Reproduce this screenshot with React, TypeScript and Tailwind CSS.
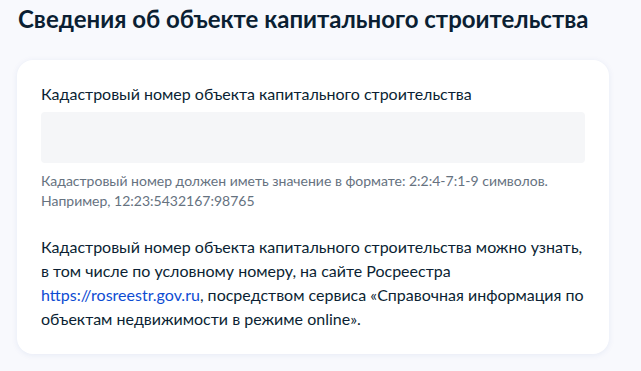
export default function App() {
  return (
    <div className="min-h-[371px] w-[641px] bg-[#f8f9fd] pt-[3px] text-[#0b1f33]" style={{ fontFamily: "Lato, 'Noto Sans', sans-serif" }}>
      <h1 className="ml-[18px] text-[24px] font-bold leading-[32px]">Сведения об объекте капитального строительства</h1>
      <div className="ml-[17px] mt-[25px] w-[592px] rounded-[16px] bg-white px-[24px] pt-[22px] pb-[23px] shadow-[0_1px_6px_rgba(30,60,150,0.08)]">
        <div className="text-[16px] leading-[24px]">Кадастровый номер объекта капитального строительства</div>
        <div className="mt-[6px] h-[51px] w-full rounded-[4px] bg-[#f5f6f8]"></div>
        <div className="mt-[8px] text-[14px] leading-[20px] text-[#66727f]">
          Кадастровый номер должен иметь значение в формате: 2:2:4-7:1-9 символов.<br />Например, 12:23:5432167:98765
        </div>
        <p className="mt-[24px] text-[16px] leading-[24px]">
          Кадастровый номер объекта капитального строительства можно узнать, в том числе по условному номеру, на сайте Росреестра{" "}
          <a className="text-[#0d4cd3]">https://rosreestr.gov.ru</a>, посредством сервиса «Справочная информация по объектам недвижимости в режиме online».
        </p>
      </div>
    </div>
  );
}
